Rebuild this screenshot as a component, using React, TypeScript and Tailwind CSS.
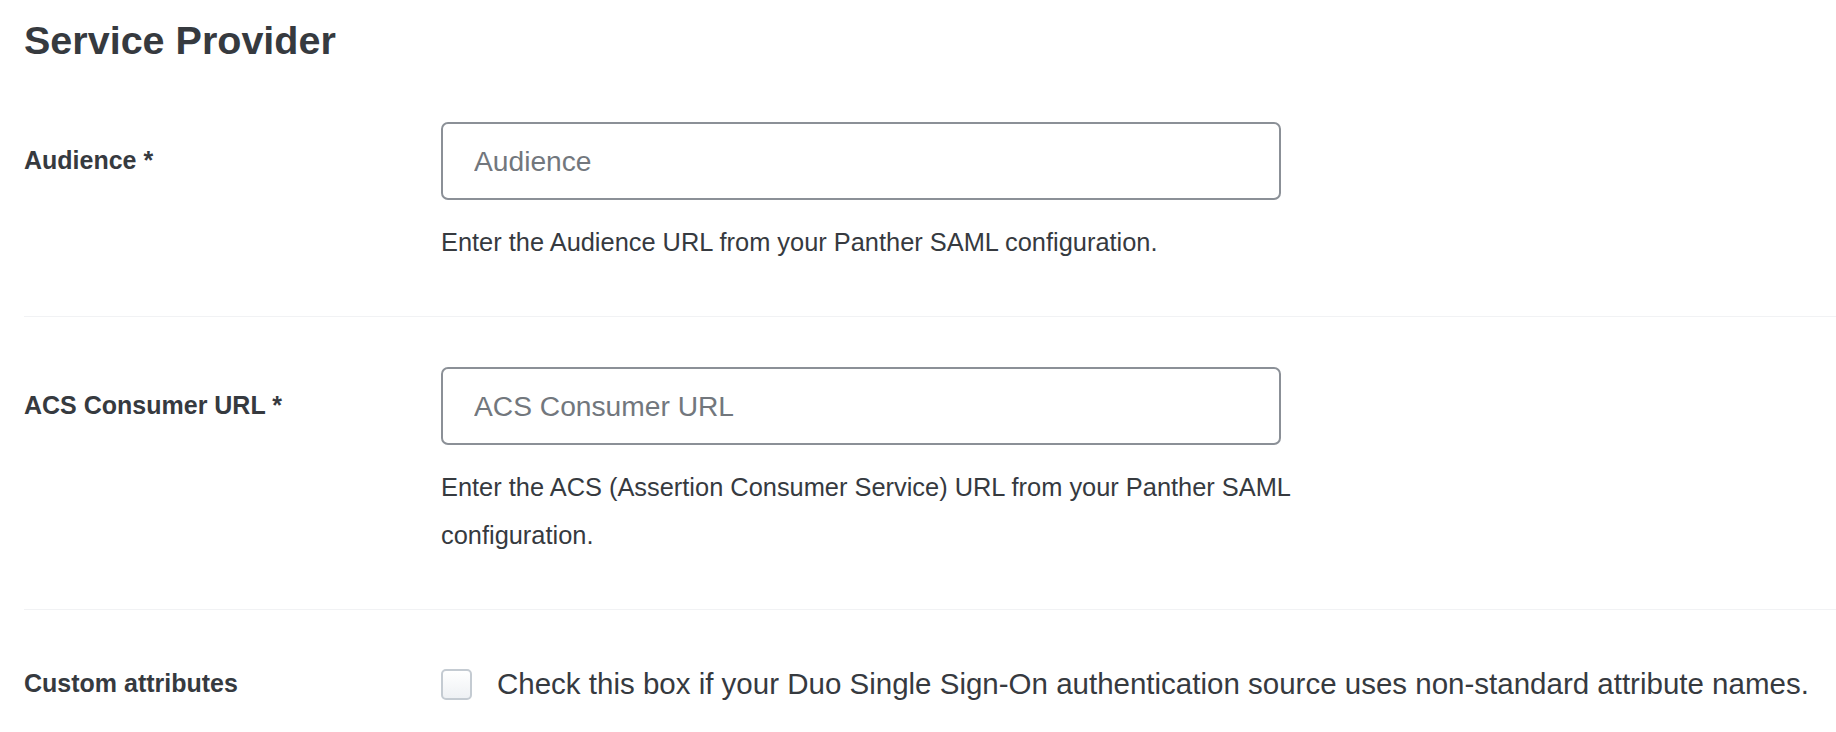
import { useState } from "react";

const font = { fontFamily: '"Liberation Sans", Arial, Helvetica, sans-serif' };

type FieldProps = {
  label: string;
  placeholder: string;
  help: string;
};

function TextField({ label, placeholder, help }: FieldProps) {
  const [value, setValue] = useState("");
  return (
    <div className="grid grid-cols-[417px_1fr] border-b border-[#f1f2f4] pt-[50px] pb-[50px]">
      <div className="flex h-[78px] items-center text-[25px] font-bold text-[#363a3f]">
        {label}
      </div>
      <div>
        <input
          value={value}
          onChange={(e) => setValue(e.target.value)}
          placeholder={placeholder}
          className="block h-[78px] w-[840px] rounded-[7px] border-2 border-[#8b9097] bg-white px-[31px] text-[28.2px] text-[#363a3f] outline-none placeholder:text-[#72777d]"
          style={font}
        />
        <p className="mt-[18px] w-[850px] text-[25.4px] leading-[48px] text-[#363a3f]">
          {help}
        </p>
      </div>
    </div>
  );
}

export default function App() {
  const [checked, setChecked] = useState(false);
  return (
    <div className="min-h-screen bg-white pl-[24px] pt-[17px]" style={font}>
      <h2 className="mb-[8px] text-[39.5px] font-bold leading-[47px] text-[#363a3f]">
        Service Provider
      </h2>

      <TextField
        label="Audience *"
        placeholder="Audience"
        help="Enter the Audience URL from your Panther SAML configuration."
      />
      <TextField
        label="ACS Consumer URL *"
        placeholder="ACS Consumer URL"
        help="Enter the ACS (Assertion Consumer Service) URL from your Panther SAML configuration."
      />

      {/* custom attributes */}
      <div className="grid grid-cols-[417px_1fr] pt-[50px]">
        <div className="flex h-[48px] items-center text-[25px] font-bold text-[#363a3f]">
          Custom attributes
        </div>
        <label className="flex h-[48px] cursor-pointer items-center gap-[25px]">
          <span
            onClick={() => setChecked(!checked)}
            className="block h-[31px] w-[31px] shrink-0 rounded-[5px] border-2 border-[#c4cbd2] bg-gradient-to-b from-white to-[#eef1f4]"
          >
            {checked && (
              <svg viewBox="0 0 24 24" className="h-full w-full" fill="none" stroke="#363a3f" strokeWidth="3">
                <path d="M5 12l5 5 9-10" />
              </svg>
            )}
          </span>
          <span className="whitespace-nowrap text-[29.5px] text-[#363a3f]">
            Check this box if your Duo Single Sign-On authentication source uses non-standard attribute names.
          </span>
        </label>
      </div>
    </div>
  );
}
